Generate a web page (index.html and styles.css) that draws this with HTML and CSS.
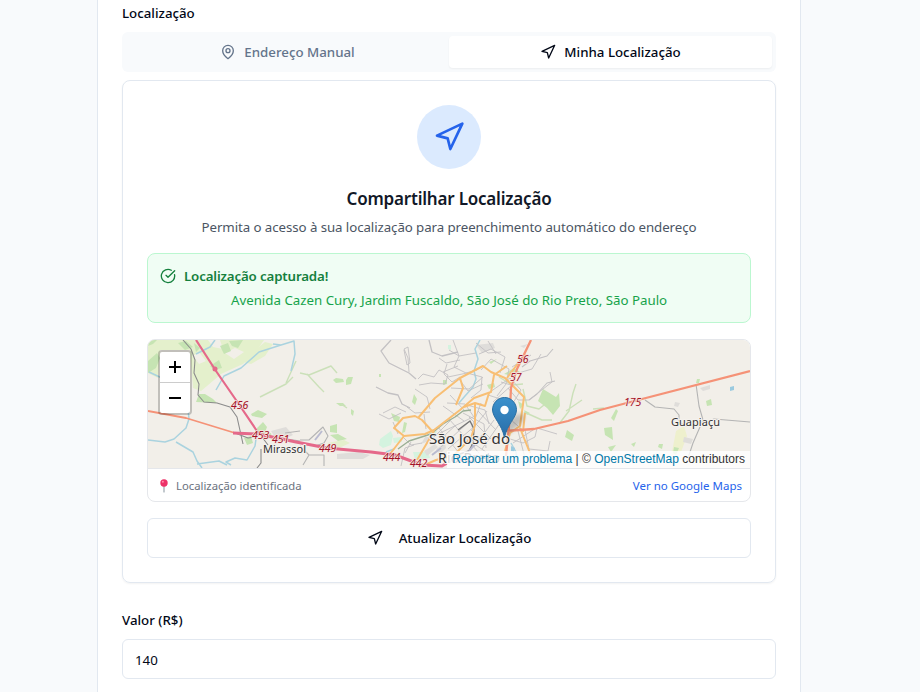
FILE: index.html
```html
<!DOCTYPE html>
<html lang="pt-BR">
<head>
<meta charset="utf-8">
<title>Localização</title>
<link rel="stylesheet" href="styles.css">
</head>
<body>
<svg class="defs" width="0" height="0">
  <symbol id="nav" viewBox="0 0 24 24"><polygon points="3 11 22 2 13 21 11 13 3 11"/></symbol>
</svg>
<main class="panel">
  <div class="label"><span class="t-label">Localização</span></div>
  <div class="tabs">
    <div class="tab"><svg class="icon" viewBox="0 0 24 24"><path d="M20 10c0 6-8 12-8 12s-8-6-8-12a8 8 0 0 1 16 0Z"/><circle cx="12" cy="10" r="3"/></svg><span class="t-manual">Endereço Manual</span></div>
    <div class="tab active"><svg class="icon"><use href="#nav"/></svg><span class="t-mine">Minha Localização</span></div>
  </div>
  <section class="card">
    <div class="circle"><svg><use href="#nav"/></svg></div>
    <h3><span class="t-title">Compartilhar Localização</span></h3>
    <p class="desc"><span class="t-desc">Permita o acesso à sua localização para preenchimento automático do endereço</span></p>
    <div class="success">
      <div class="success-head"><svg class="icon" viewBox="0 0 24 24"><path d="M21.8 10A10 10 0 1 1 17 3.34"/><path d="m9 11 3 3L22 4"/></svg><span class="t-captured">Localização capturada!</span></div>
      <p><span class="t-address">Avenida Cazen Cury, Jardim Fuscaldo, São José do Rio Preto, São Paulo</span></p>
    </div>
    <div class="mapbox">
      <div class="map">
        <svg class="tiles" viewBox="148 340 602 128">
          <rect x="148" y="340" width="602" height="128" fill="#f2efe9"/>
          <g fill="#e4f0cc">
            <path d="M148 340H264L257 350 243 364 221 374 207 386 201 391 193 388 190 350 160 350 158 378 148 373Z"/>
            <path d="M255 350l10-8 8 2-8 12-14 8-8-2Z"/>
            <path d="M327 443l17-3 6 3-11 5Z"/>
            <path d="M676 431l8-5 3 10-6 16h-9Z" fill="#eef0cd"/>
          </g>
          <g fill="#f2efe9"><path d="M208 340h12l3 9-10-2ZM225 353l10-5 9 4-10 7ZM193 356l6-4 7 9-7 3Z"/></g>
          <g fill="#c6e4b3">
            <path d="M148 361l9-8 3 5-4 10-8 5ZM148 340h9l-4 4-5 2ZM178 343l8-2 7 6-8 3ZM194 343l6 5-4 4ZM220 346l8-3 3 8-7 3ZM229 341l14-1-5 8-6-2ZM210 366l9-6 3 8-8 2ZM199 394l6 0 8 5 4 4-21-1ZM251 414l7-4 9 4-5 4-10-2ZM257 428l6-6 4 5-3 8-6-1ZM244 438l7-2 2 7-6 2ZM262 435l9-2 1 5-8 1Z"/>
            <path d="M333 380l3-2 7 1 1 3-8 1ZM346 380l2-3 5 0-2 7-5 1ZM330 426l7-2 0 9-7-1ZM336 403l7 0 3 3-6 0ZM351 409l3 2-1 5-2-2ZM330 435l8-1 9 5-9 2ZM391 413l9 4-1 5-5-1ZM404 422l3 1-2 9-3 1ZM414 394l3 5-2 6-3-3ZM443 380l4 0 0 4-4 1ZM379 374l2 0 0 3-2 0Z"/>
            <path d="M538 401l5-12 13 8 3-4 1 13-7 9-6-7ZM487 385l7-2 1 4-6 2ZM504 374l10-6 6 4-7 4ZM489 362l8-3-6 5ZM518 401l6 4-4 4ZM611 418l5-9 2 2-4 10ZM604 428l8-1 1 13-8-5ZM659 444h4l-1 5-4-2ZM674 447l5 1-3 7-3-2ZM608 447l8-2-5 7ZM567 430l7 5-2 6-7-4ZM524 410l6 3-3 2ZM706 401l5-2 1 6-5 1ZM697 379l3 0-1 4-3 0ZM631 444l5-2-2 5Z"/>
          </g>
          <g fill="#d4f3df"><path d="M380 439l11-8 2 5-2 9-8 3-4-3ZM393 438l8-1 1 5-8 1ZM413 452h15l2 6-15 2ZM448 345l3 0 0 5-3-1ZM428 433l9-2-3 6Z"/></g>
          <g fill="#dfddda"><path d="M424 451l11-7 3 3-11 9ZM425 437h6l-2 4-8 3ZM337 454l22-2 11 3-7 4-26 0ZM271 431l15-4 7 8-15 7ZM476 345l17-2 2 5-13 5ZM520 346l8-2-4 4ZM436 449l9-6 1 5-7 7ZM700 388l10-3 0 4-7 2ZM675 402l5 1-2 4-4-1ZM684 437l9 2-2 5-8-2ZM493 413l8-8 8 3-6 10Z"/></g>
          <g fill="none" stroke="#cbe0b9" stroke-width="1.4">
            <path d="M300 373l9 2 22-9 6 7M307 374l12 13 5 5M260 397l26-13 7-7M296 361l-10 22M341 404l6 4M499 377l13 8 11-1M523 389l4 17 12 3 5-4M524 412l18 8 10 0M559 424l10-13 4-18 3-9M566 411l16-11M593 409l11-1"/>
          </g>
          <g fill="none" stroke="#aad3df" stroke-width="1.5">
            <path d="M149 372l15 7M196 354l14-7 5-7M216 390l8-14 17-8 18-16 22-7 13-4 1 13-4 17M281 345l-8-1"/>
            <path d="M148 440l17 2 9-3 12-11 3-9-1-10 0-9M176 442l17 10 4 9 5 7M197 464l22-3 8 4M231 465l-5-3 9-4 12 2 4-7 4-7 1-7"/>
            <path d="M480 340l-5 9 3 10-4 12 2 8-3 8-8 9-6 7M511 443l5 9 1 8M386 452l8-3"/>
          </g>
          <g fill="none" stroke="#8b8b8b" stroke-width="1.1">
            <path d="M183 340l8 9 4 11-1 13 5 11-1 11 6 7 13 1 13 4 7 10 6 27M235 433l13 5 7-1M262 437l6 8M261 449v14l-4 5"/>
            <g stroke="#b4b4b4"><path d="M285 433l15-2M287 439l13 2M300 440l9 0 14-13 5 9-4 7-9 3M300 446l9 9-6 10M309 455l15 0 0 11"/>
            <path d="M645 400l10 7 19 2 5 6 0 7 6 4 14-1 7-3 8-3 36 3M696 384l3 22 4 14-10 23-5 15"/></g>
          </g>
          <g fill="none" stroke="#c3c1c3" stroke-width=".9">
            <path stroke-width="1.3" d="M391 340l-10 11 8 12 20 10 7 6M376 387l12 6 10 2 4 9 8 4M429 340l3 12 10 4 16-4"/>
            <path d="M404 349l4-2 2 16-3 2-3-15M409 372l-1-14-4-9M418 379l5-5 11 3 5-7 9 5-3 9-14-1-12 2M439 358l7 5 14-3M447 364l-3 10 8 8 8-5M443 372l15-6M415 389l12 8 3 12M407 407l8 6 15-1M383 413l12-6 11 5M379 414l10 5 12-6M393 422l5 12M424 414l2 15M403 437l8 8 11-2M411 442l-6 11"/>
            <path d="M401 466l4-18 9-3M430 441l20-20M434 445l22-20M441 447l29-26M448 449l28-24M438 427l26 32M449 419l30 34M436 435l37-18M443 406l21 15M447 403l18 1 11 16M450 395l15 16"/>
            <path d="M449 350l10 6-5 11 12 6 11-3M453 340l6 16 17-3M448 377l19-4 15 4-1 13-10 8M459 379l9 12 15-7M451 388l18 1 14-12M481 370l10-11 18 10-3 15-9 12M476 343l12 10 13-1M479 354l12-5 14 8-5 16M512 367l19-12M515 374l17-5 9-15M488 341l8 13M490 392l20-14 11 12-8 13-25-8M493 402l20-18M508 388l10 12 11 0 23-18-2-10M467 405l18 5 4 14M463 413l21 11 2 24M481 403l-9 24M487 411l-16 20M494 420l-20 27M500 423l-18 26M469 417l22 22M478 411l18 19M470 441l16 11M507 438l16 5 12-6 2-9 20 6M525 430l4 19 19 2 2-10M513 443l20-13M518 431l7 27M505 415l19 16M501 382l13 4"/>
            <path d="M522 367l8-6 17-5 6-7M529 400l8-6 10-11 8-2" stroke-width="1.1"/>
            <path d="M458 430l12-9 4 8-1 14-4 8-9 3" stroke="#777" stroke-width="1.4"/>
          </g>
          <path d="M398 449l11-8 22-7 12-10 12-7 8-6 8-1" fill="none" stroke="#9aaf94" stroke-width="1.4"/>
          <path d="M315 440l7-9M432 455l9-7M469 451l14-16" fill="none" stroke="#babbd0" stroke-width="2"/>
          <g fill="none" stroke="#f8bf74" stroke-width="2" stroke-linejoin="round">
            <path d="M390 454l14-18 21-2 9-4 26-20 14-12 17-6 3-17 13-9"/>
            <path d="M404 436l-10-8 9-10 12-2 7 4 10 11M418 418l17-20 25-20 23-12 8 6 14 6 7 7 12 12-4 29-10 7-5 18"/>
            <path d="M460 378l3 10-7 17M464 407l11-4 10 3 4-13M475 403v22l-4 13-17 17-18 5-16 7M523 432l2-19M434 431l-17 29M507 378l9-12 9-12M520 428l10 25"/>
          </g>
          <g fill="none" stroke="#f59277" stroke-width="2.5">
            <path d="M531 340l-14 29-6 19-2 38-3 30M504 431l30-2 34-8 32-11 42-11 108-28" stroke-width="2.3"/>
            <path d="M148 411l38 7 49 15" stroke-width="1.8"/>
          </g>
          <g fill="none" stroke="#e5698a" stroke-width="3">
            <path d="M196 340l20 31 20 29 23 34" stroke-width="2.2"/>
            <path d="M233 433l25 1 38 8 31 6 44 4 24 3 27 10 20 1 12-7 18 3" stroke-width="3"/>
            <circle cx="215" cy="369" r="1"/>
          </g>
          <g fill="#9bcadf"><path d="M730 387l4-1 0 4-4 1ZM511 446l4 2-1 4-3-1ZM168 398l2 1-2 1Z"/></g>
          <g class="road-labels"><text x="231" y="409">456</text><text x="252" y="439">453</text><text x="272" y="443">451</text><text x="319" y="452">449</text><text x="383" y="461">444</text><text x="410" y="467">442</text><text x="517" y="363">56</text><text x="510" y="381">57</text><text x="624" y="406">175</text></g>
          <g class="places"><text x="263" y="453" textLength="43" font-size="11">Mirassol</text><text x="671" y="426" textLength="49" font-size="11">Guapiaçu</text><text x="429" y="444" textLength="81" lengthAdjust="spacingAndGlyphs" font-size="14">São José do</text><text x="438" y="463" textLength="62" font-size="14">Rio Preto</text></g>
        </svg>
        <svg class="marker" viewBox="0 0 60 41">
          <defs><linearGradient id="pin" x2="0" y2="1"><stop stop-color="#3b91cd"/><stop offset="1" stop-color="#286da7"/></linearGradient><filter id="soft"><feGaussianBlur stdDeviation="2"/></filter></defs>
          <path d="M12 40L16 25Q24 14 32 18Q33 24 24 31Z" fill="#000" opacity=".2" filter="url(#soft)"/>
          <path d="M.5 12.7C.5 6 5.9.5 12.5.5S24.5 6 24.5 12.7C24.5 20.8 15.2 27 12.5 40.5 9.8 27 .5 20.8.5 12.7Z" fill="url(#pin)" stroke="#2b6fa2"/><circle cx="12.5" cy="13" r="4.2" fill="#fff"/>
        </svg>
        <div class="zoom"><div><i class="plus"></i></div><div><i class="minus"></i></div></div>
        <div class="attribution"><a>Reportar um problema</a> | © <a>OpenStreetMap</a> contributors</div>
      </div>
      <div class="map-footer">
        <div class="identified"><svg class="pushpin" viewBox="0 0 8 14"><path d="M4 7v6" stroke="#9aa5ad" stroke-width="1.2"/><circle cx="4" cy="4" r="3.7" fill="#ed3268"/><circle cx="2.9" cy="2.7" r="1" fill="#ff8baa"/></svg><span class="t-identified">Localização identificada</span></div>
        <a><span class="t-google">Ver no Google Maps</span></a>
      </div>
    </div>
    <div class="button"><svg class="icon"><use href="#nav"/></svg><span class="t-update">Atualizar Localização</span></div>
  </section>
  <div class="label value-label"><span class="t-value">Valor (R$)</span></div>
  <div class="input"><span class="t-input">140</span></div>
</main>
</body>
</html>
```
FILE: styles.css
```css
* { box-sizing: border-box; }
body { margin: 0; height: 692px; overflow: hidden; background: #f8fafc; color: #020817; font: 13.3px/20px "Noto Sans", "Open Sans", sans-serif; }
h3, p { margin: 0; }
span { white-space: nowrap; }
.defs { position: absolute; }
svg { flex: none; fill: none; stroke: currentColor; stroke-width: 2; stroke-linecap: round; stroke-linejoin: round; }
.icon { width: 16px; height: 16px; }
.panel { width: 704px; height: 692px; margin-left: 97px; padding: 3px 24px 0; background: #fff; border: solid #e2e8f0; border-width: 0 1px; }
.label { height: 20px; font-weight: 500; }
.tabs { margin-top: 9px; height: 40px; padding: 4px; border-radius: 6px; background: #f8fafc; display: grid; grid-template-columns: 1fr 1fr; }
.tab { display: flex; align-items: center; justify-content: center; gap: 8px; color: #64748b; font-weight: 500; border-radius: 4px; }
.tab.active { color: #020817; background: #fff; box-shadow: 0 1px 2px rgba(0,0,0,.05); }
.card { margin-top: 8px; height: 503px; padding: 24px; border: 1px solid #e2e8f0; border-radius: 8px; box-shadow: 0 1px 2px rgba(0,0,0,.05); text-align: center; }
.circle { width: 64px; height: 64px; margin: 0 auto 16px; border-radius: 50%; background: #dbeafe; color: #2563eb; display: flex; align-items: center; justify-content: center; }
.circle svg { width: 32px; height: 32px; }
h3 { font-size: 17px; line-height: 28px; font-weight: 600; letter-spacing: -.2px; color: #111827; }
.desc { margin-top: 4px; color: #4b5563; letter-spacing: -.08px; }
.success { margin-top: 16px; height: 70px; padding: 12px; border: 1px solid #bbf7d0; border-radius: 8px; background: #f0fdf4; color: #16a34a; }
.success p { margin-top: 4px; }
.success-head { display: flex; align-items: center; gap: 8px; color: #15803d; font-weight: 600; letter-spacing: -.15px; }
.mapbox { margin-top: 16px; height: 163px; border: 1px solid #e5e7eb; border-radius: 8px; overflow: hidden; }
.map { position: relative; height: 128px; overflow: hidden; text-align: left; }
.tiles { display: block; width: 602px; height: 128px; stroke: none; stroke-linecap: butt; }
.road-labels { font: italic 10.5px "Noto Sans", sans-serif; fill: #a31228; stroke: #f5e6e1; stroke-width: 1.5px; paint-order: stroke; }
.places { font-family: "Noto Sans", sans-serif; fill: #333; stroke: #f5f2ee; stroke-width: 2px; paint-order: stroke; }
.marker { position: absolute; left: 344px; top: 57px; width: 60px; height: 41px; stroke: none; stroke-width: 1; }
.zoom { position: absolute; left: 10px; top: 10px; width: 34px; border: 2px solid rgba(0,0,0,.2); background: #fff; background-clip: padding-box; border-radius: 4px; }
.zoom div { height: 30px; display: grid; place-items: center; }
.zoom div:first-child { height: 31px; border-bottom: 1px solid #ccc; }
.plus, .minus { width: 12px; height: 12px; background: linear-gradient(#000 0 0) center / 12px 2px no-repeat; }
.plus { background: linear-gradient(#000 0 0) center / 12px 2px no-repeat, linear-gradient(#000 0 0) center / 2px 12px no-repeat; }
.attribution { position: absolute; right: 0; bottom: 0; padding: 0 5px; background: rgba(255,255,255,.8); color: #333; font: 12px/17px "Liberation Sans", Arial, sans-serif; white-space: nowrap; }
.attribution a { color: #0078a8; }
.map-footer { height: 33px; padding: 1px 8px 0; border-top: 1px solid #e5e7eb; display: flex; align-items: center; justify-content: space-between; color: #6b7280; font-size: 11.3px; line-height: 17px; }
.map-footer a { color: #2563eb; font-size: 11.5px; }
.identified { display: flex; align-items: center; padding-left: 4px; gap: 8px; }
.pushpin { width: 8px; height: 14px; stroke: none; }
.button { margin-top: 16px; height: 40px; border: 1px solid #e2e8f0; border-radius: 6px; display: flex; align-items: center; justify-content: center; gap: 16px; font-weight: 500; }
.value-label { margin-top: 27px; }
.input { margin-top: 9px; height: 40px; padding: 10px 12px; border: 1px solid #e2e8f0; border-radius: 6px; line-height: 20px; }
```
